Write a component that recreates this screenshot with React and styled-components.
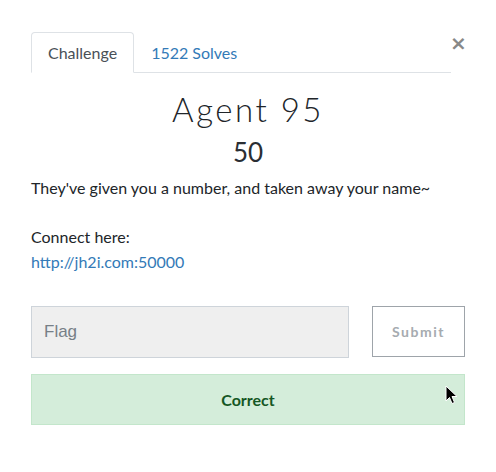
import styled, { createGlobalStyle } from "styled-components"

const GlobalStyle = createGlobalStyle`
  body {
    margin: 0;
    background: #fff;
    font-family: Lato, "Liberation Sans", sans-serif;
  }
`

const Modal = styled.div`
  width: 434px;
  padding: 32px 0 0 31px;
  position: relative;
`

const Header = styled.div`
  display: flex;
  align-items: flex-start;
`

const Tabs = styled.div`
  display: flex;
  width: 420px;
  border-bottom: 1px solid #dee2e6;
`

const Tab = styled.div`
  box-sizing: border-box;
  height: 41px;
  padding: 0 16px;
  display: flex;
  align-items: center;
  font-size: 16px;
  margin-bottom: -1px;
  border: 1px solid ${(p) => (p.$active ? "#dee2e6" : "transparent")};
  border-bottom-color: ${(p) => (p.$active ? "#fff" : "transparent")};
  border-radius: 4px 4px 0 0;
  background: ${(p) => (p.$active ? "#fff" : "transparent")};
  color: ${(p) => (p.$active ? "#495057" : "#337ab7")};
`

const Close = styled.div`
  width: 13px;
  margin-left: -1px;
  font-family: "DejaVu Sans", sans-serif;
  font-size: 20px;
  font-weight: bold;
  line-height: 20px;
  color: #888;
  text-align: center;
  margin-top: 1px;
`

const Title = styled.h3`
  margin: 16px 0 0;
  text-align: center;
  font-family: Lato, sans-serif;
  font-weight: 300;
  font-size: 33px;
  letter-spacing: 2.5px;
  line-height: 40px;
  color: #212529;
`

const Points = styled.div`
  margin-top: 8px;
  text-align: center;
  font-family: Lato, sans-serif;
  font-weight: 400;
  font-size: 26px;
  line-height: 30px;
  color: #2a2e33;
`

const Description = styled.div`
  margin-top: 9px;
  font-size: 16px;
  line-height: 24.5px;
  color: #212529;

  p {
    margin: 0 0 24.5px;
  }
`

const Link = styled.a`
  color: #337ab7;
  text-decoration: none;
`

const FormRow = styled.div`
  display: flex;
  gap: 23px;
  margin-top: 32px;
`

const FlagInput = styled.input`
  box-sizing: border-box;
  width: 318px;
  height: 52px;
  padding: 0 12px;
  background: #efefef;
  border: 1px solid #ced4da;
  font-family: "Liberation Sans", Arial, sans-serif;
  font-size: 17px;
  color: #495057;
  outline: none;

  &::placeholder {
    color: #777f87;
  }
`

const SubmitButton = styled.button`
  box-sizing: border-box;
  width: 93px;
  height: 51px;
  background: #fff;
  border: 1px solid #9ea4aa;
  font-family: Lato, sans-serif;
  font-weight: bold;
  font-size: 14px;
  letter-spacing: 1.5px;
  color: #a6abb0;
`

const Alert = styled.div`
  box-sizing: border-box;
  margin-top: 16px;
  height: 51px;
  display: flex;
  align-items: center;
  justify-content: center;
  background: #d4edda;
  border: 1px solid #c3e6cb;
  color: #155724;
  font-weight: bold;
  font-size: 16px;
  position: relative;
`

const Cursor = styled.svg`
  position: absolute;
  left: 413px;
  top: 10px;
`

export default function App() {
  return (
    <>
      <GlobalStyle />
      <Modal>
        <Header>
          <Tabs>
            <Tab $active>Challenge</Tab>
            <Tab>1522 Solves</Tab>
          </Tabs>
          <Close>×</Close>
        </Header>
        <Title>Agent 95</Title>
        <Points>50</Points>
        <Description>
          <p>They've given you a number, and taken away your name~</p>
          <p>
            Connect here:
            <br />
            <Link href="#">http://jh2i.com:50000</Link>
          </p>
        </Description>
        <FormRow>
          <FlagInput placeholder="Flag" />
          <SubmitButton>Submit</SubmitButton>
        </FormRow>
        <Alert>
          Correct
          <Cursor width="14" height="22" viewBox="0 0 14 22">
            <path d="M1 1 L1 16 L4.5 12.5 L7 18.5 L9.5 17.5 L7 11.5 L12 11.5 Z" fill="#000" stroke="#fff" strokeWidth="1" />
          </Cursor>
        </Alert>
      </Modal>
    </>
  )
}
